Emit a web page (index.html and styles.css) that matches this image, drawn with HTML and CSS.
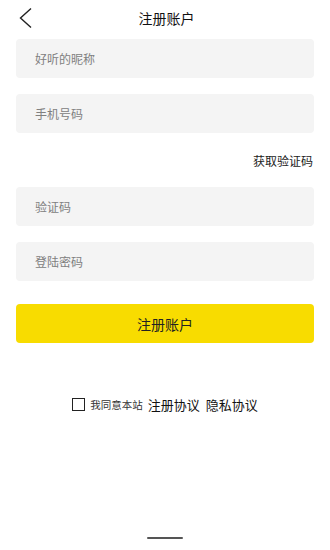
FILE: index.html
```html
<!DOCTYPE html>
<html lang="zh-CN">
<head>
    <meta charset="UTF-8">
    <meta name="viewport" content="width=device-width, initial-scale=1.0">
    <title>注册账户</title>
    <link rel="stylesheet" href="styles.css">
</head>

<body>
    <div class="page">
        <div class="header">
            <a class="back" href="#">
                <svg width="14" height="22" viewBox="0 0 14 22">
                    <polyline points="12,1.5 1.5,11 12,20.5" fill="none" stroke="#222" stroke-width="1.4"/>
                </svg>
            </a>
            <h1>注册账户</h1>
            <span></span>
        </div>

        <form class="form">
            <input class="field first" type="text" placeholder="好听的昵称">
            <input class="field" type="text" placeholder="手机号码">
            <div class="code-row">
                <a class="get-code" href="#">获取验证码</a>
            </div>
            <input class="field no-gap" type="text" placeholder="验证码">
            <input class="field" type="password" placeholder="登陆密码">
            <button class="submit" type="button">注册账户</button>
        </form>

        <div class="agree">
            <span class="box"></span>
            <span class="agree-text">我同意本站</span>
            <a href="#">注册协议</a>
            <a href="#">隐私协议</a>
        </div>

        <div class="home-bar"></div>
    </div>
</body>

</html>
```

FILE: styles.css
```css
body {
    margin: 0;
    padding: 0;
    background-color: #fff;
    font-family: "Noto Sans CJK SC", "Noto Sans", sans-serif;
    color: #222;
}

.page {
    min-height: 550px;
    display: flex;
    flex-direction: column;
}

.header {
    height: 36px;
    display: grid;
    grid-template-columns: 1fr auto 1fr;
    align-items: center;
    padding: 0 16px 0 19px;
}

.back {
    display: flex;
    align-items: center;
    height: 22px;
}

.header h1 {
    margin: 0;
    font-size: 14px;
    font-weight: 400;
    color: #111;
}

.form {
    display: flex;
    flex-direction: column;
    padding: 0 16px;
    margin-top: 3px;
}

.field {
    height: 39px;
    margin-top: 16px;
    padding: 0 0 0 19px;
    border: none;
    border-radius: 4px;
    background-color: #f4f4f4;
    font-family: inherit;
    font-size: 12px;
    color: #333;
    outline: none;
}

.field.first,
.field.no-gap {
    margin-top: 0;
}

.field::placeholder {
    color: #808080;
}

.code-row {
    height: 54px;
    display: flex;
    align-items: center;
    justify-content: flex-end;
}

.get-code {
    font-size: 12px;
    color: #222;
    text-decoration: none;
    margin-right: 1px;
}

.submit {
    height: 39px;
    margin-top: 23px;
    border: none;
    border-radius: 4px;
    background-color: #f8dc00;
    font-family: inherit;
    font-size: 14px;
    color: #222;
    cursor: pointer;
}

.agree {
    margin-top: 54px;
    display: flex;
    align-items: center;
    justify-content: center;
    height: 14px;
}

.box {
    width: 11px;
    height: 11px;
    border: 1.3px solid #222;
    margin-right: 5px;
}

.agree-text {
    font-size: 10.5px;
    color: #333;
    margin-right: 5px;
}

.agree a {
    font-size: 13px;
    color: #111;
    text-decoration: none;
    margin-right: 6px;
}

.agree a:last-child {
    margin-right: 0;
}

.home-bar {
    margin: auto auto 11px;
    width: 36px;
    height: 2px;
    border-radius: 1px;
    background-color: #555;
}
```
